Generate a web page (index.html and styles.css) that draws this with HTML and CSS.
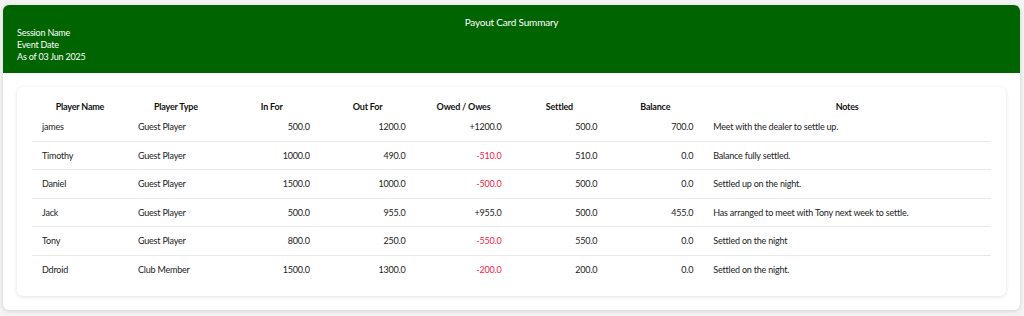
FILE: index.html
```html
<!DOCTYPE html>
<html lang="en">
<head>
<meta charset="utf-8">
<title>Payout Card Summary</title>
<link rel="stylesheet" href="styles.css">
</head>
<body>
<div class="card">
  <header class="card-header">
    <div class="title">Payout Card Summary</div>
    <div class="meta">Session Name</div>
    <div class="meta">Event Date</div>
    <div class="meta">As of 03 Jun 2025</div>
  </header>
  <div class="card-body">
    <div class="table-card">
      <table class="payout">
        <colgroup>
          <col class="c-num"><col class="c-num"><col class="c-num"><col class="c-num"><col class="c-num"><col class="c-num"><col class="c-num"><col class="c-notes">
        </colgroup>
        <thead>
          <tr>
            <th>Player Name</th><th>Player Type</th><th>In For</th><th>Out For</th><th>Owed / Owes</th><th>Settled</th><th>Balance</th><th>Notes</th>
          </tr>
        </thead>
        <tbody>
          <tr><td>james</td><td>Guest Player</td><td class="num">500.0</td><td class="num">1200.0</td><td class="num">+1200.0</td><td class="num">500.0</td><td class="num">700.0</td><td>Meet with the dealer to settle up.</td></tr>
          <tr><td>Timothy</td><td>Guest Player</td><td class="num">1000.0</td><td class="num">490.0</td><td class="num neg">-510.0</td><td class="num">510.0</td><td class="num">0.0</td><td>Balance fully settled.</td></tr>
          <tr><td>Daniel</td><td>Guest Player</td><td class="num">1500.0</td><td class="num">1000.0</td><td class="num neg">-500.0</td><td class="num">500.0</td><td class="num">0.0</td><td>Settled up on the night.</td></tr>
          <tr><td>Jack</td><td>Guest Player</td><td class="num">500.0</td><td class="num">955.0</td><td class="num">+955.0</td><td class="num">500.0</td><td class="num">455.0</td><td>Has arranged to meet with Tony next week to settle.</td></tr>
          <tr><td>Tony</td><td>Guest Player</td><td class="num">800.0</td><td class="num">250.0</td><td class="num neg">-550.0</td><td class="num">550.0</td><td class="num">0.0</td><td>Settled on the night</td></tr>
          <tr><td>Ddroid</td><td>Club Member</td><td class="num">1500.0</td><td class="num">1300.0</td><td class="num neg">-200.0</td><td class="num">200.0</td><td class="num">0.0</td><td>Settled on the night.</td></tr>
        </tbody>
      </table>
    </div>
  </div>
</div>
</body>
</html>
```
FILE: styles.css
```css
* { box-sizing: border-box; }
html, body { margin: 0; }
body {
  background: #f3f3f3;
  padding: 5px 4px 5px 3px;
  font-family: "Lato", "Open Sans", "Liberation Sans", sans-serif;
  font-size: 9px;
  letter-spacing: -0.2px;
  color: #222;
}
.card {
  background: #fff;
  border-radius: 6px;
  box-shadow: 0 1px 4px rgba(0,0,0,0.14);
  overflow: hidden;
}
.card-header {
  background: #006400;
  color: #fff;
  padding: 12px 14px 10px;
  height: 68px;
}
.title {
  text-align: center;
  font-size: 10px;
  line-height: 10px;
}
.meta {
  line-height: 12px;
}
.card-body {
  padding: 14px;
}
.table-card {
  background: #fff;
  border-radius: 6px;
  box-shadow: 0 1px 4px rgba(0,0,0,0.12);
  padding: 14px 15px 13px;
}
.payout {
  width: 100%;
  border-collapse: collapse;
  table-layout: fixed;
}
.c-num { width: 10%; }
.c-notes { width: 30%; }
.payout th {
  font-weight: 700;
  color: #111;
  text-align: center;
  padding: 0 10px;
  line-height: 12px;
}
.payout td {
  padding: 8px 10px 7.5px;
  line-height: 12px;
  border-bottom: 1px solid #e9e9e9;
  white-space: nowrap;
}
.payout tbody tr:last-child td { border-bottom: none; }
.payout td.num { text-align: right; }
.payout td.neg { color: #f31c45; }
```
